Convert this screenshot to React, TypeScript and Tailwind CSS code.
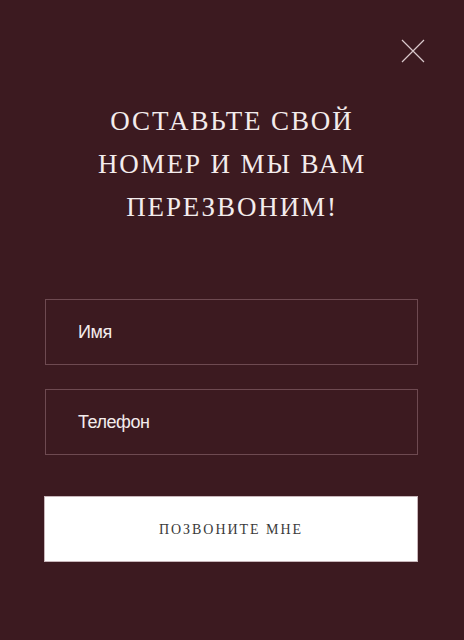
export default function App() {
  return (
    <div className="relative w-[464px] h-[640px] bg-[#3c1a20] font-['Liberation_Serif',serif]">
      <button className="absolute left-[401px] top-[39px] w-6 h-6" aria-label="Закрыть">
        <svg width="24" height="24" viewBox="0 0 24 24" fill="none" stroke="#d9c8cb" strokeWidth="1.2">
          <path d="M1 1L23 23M23 1L1 23" />
        </svg>
      </button>
      <div className="pt-[100px] px-11">
        <h2 className="text-center text-[#f3ecec] text-[27px] leading-[43px] tracking-[0.07em] uppercase">
          Оставьте свой
          <br />
          номер и мы вам
          <br />
          перезвоним!
        </h2>
        <div className="mt-[70px] flex flex-col">
          <div className="ml-px h-[66px] w-[373px] border border-[#6e4a51] flex items-center pl-8 text-[18px] text-[#f3ecec] font-['Liberation_Sans',sans-serif] tracking-tight">
            Имя
          </div>
          <div className="mt-6 ml-px h-[66px] w-[373px] border border-[#6e4a51] flex items-center pl-8 text-[18px] text-[#f3ecec] font-['Liberation_Sans',sans-serif] tracking-tight">
            Телефон
          </div>
          <button className="mt-[41px] h-[66px] w-[374px] bg-white border border-[#c8b6ba] text-[#3a3a3a] text-[14px] tracking-[0.14em] uppercase">
            Позвоните мне
          </button>
        </div>
      </div>
    </div>
  );
}
